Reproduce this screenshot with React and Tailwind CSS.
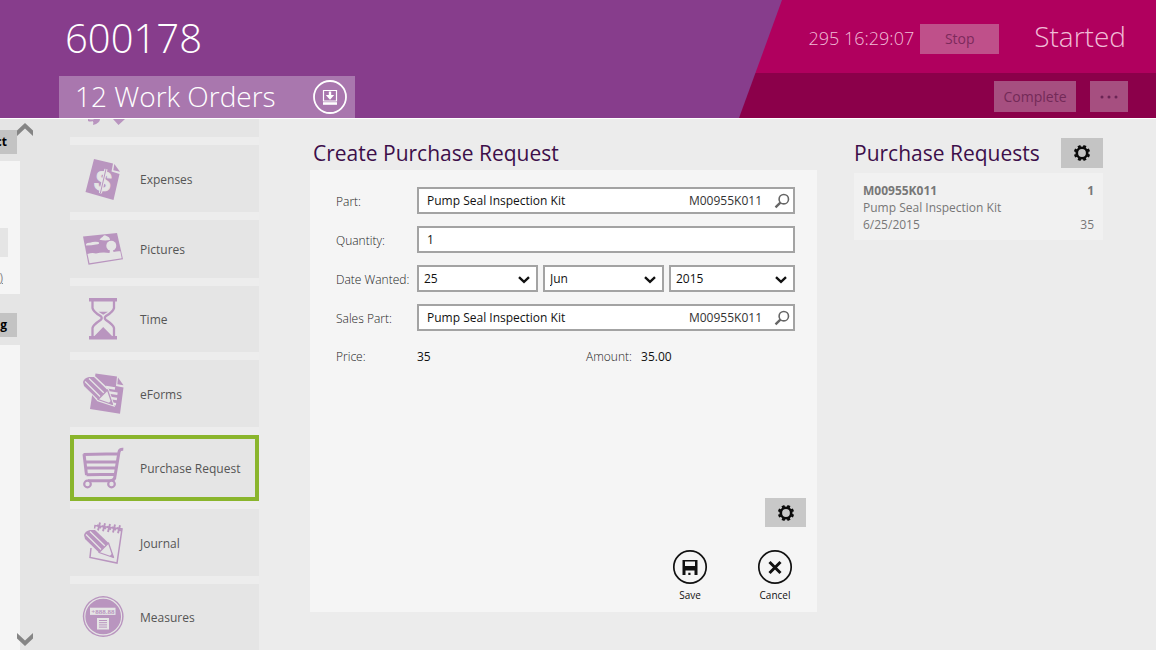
import React from "react";

const P = "#b995bf";
const L = "#e5e5e5";

function Icon({ children }) {
  return (
    <svg viewBox="0 0 44 44" className="h-11 w-11 shrink-0" fill={P} aria-hidden="true">
      {children}
    </svg>
  );
}

function Pencil() {
  return (
    <g>
      <path d="M1.5 14.5 Q1.5 9 8 8.5 L13 8.5 L27 21.5 L32.5 37.5 L17 32.5 Z" fill={L} stroke={L} strokeWidth="2" />
      <path d="M2 14 Q3 10 8 9 L13 9 L26.5 22 L17 31.5 L3 18 Z" />
      <path d="M4 13.5 L19.5 29 M8 10.5 L23.5 25.5" stroke={L} strokeWidth="1.3" fill="none" />
      <path d="M17 31.5 L26.5 22 L31.5 36.5 Z" fill={L} stroke={P} strokeWidth="1.3" strokeLinejoin="round" />
      <path d="M27.5 35.2 L30.2 32.5 L31.8 36.8 Z" />
    </g>
  );
}

const ExpensesIcon = () => (
  <Icon>
    <path d="M12 2 L31 6.5 L29.5 14.5 L37.5 17 L31.5 43 L3.5 35 Z" />
    <path d="M32.3 7 L38 14.8 L31.3 13.3 Z" />
    <g transform="rotate(13 21 24)">
      <text x="21" y="34" textAnchor="middle" fontSize="29" fontWeight="700" fontFamily="Liberation Sans, sans-serif" fill={L} stroke={L} strokeWidth="0.8">$</text>
    </g>
    <path d="M24 12 L18.4 36" stroke={L} strokeWidth="3" />
    <path d="M24 12 L18.4 36" stroke={P} strokeWidth="1" />
  </Icon>
);

const PicturesIcon = () => (
  <Icon>
    <path d="M1 9.5 L35 6 L41 32.3 L6.5 37.8 Z" />
    <path d="M5.5 27 Q10 25.5 14 26.5 Q20 25 27.5 26 L28 23 H31 L31.5 25 Q35 24 38.3 24.3 L39.7 31.3 L7.5 36.3 Z" fill={L} />
    <circle cx="29.3" cy="18.8" r="5" fill={L} />
    <path d="M17.5 12.8 Q19 10.5 20.5 10 Q22 7.3 24.5 9 Q28 10 28 13 Q23 14 17.5 12.8 Z" fill={L} />
    <path d="M4 18.5 Q3.5 15.5 8 15.8 Q12 14 16.5 15 Q18.5 17 14 17.5 Q10 18.5 4 18.5 Z" fill={L} />
  </Icon>
);

const TimeIcon = () => (
  <Icon>
    <path d="M7 1 H35 V4.5 H7 Z M7 39 H35 V42.5 H7 Z" />
    <path
      d="M10.5 4 V11 Q11 14.5 18.5 19 Q21 21 18.5 23 Q11 28 10.5 31 V39 M32 4 V11 Q31.5 14.5 24 19 Q21.5 21 24 23 Q31.5 28 32 31 V39"
      fill="none"
      stroke={P}
      strokeWidth="2.3"
    />
    <path d="M16.5 14.8 H26 L21.2 17.8 Z M21.2 30 L31 40 H11.5 Z" />
  </Icon>
);

const FormsIcon = () => (
  <Icon>
    <path d="M13.5 1.5 L35 4.5 L34 14 L41.5 15.5 L38 41.8 L8 37 Z" />
    <path d="M36 5.5 L41.5 13.2 L35.3 12.2 Z" />
    <path d="M24 15 L33 16.5 M27.5 20.5 L35.5 21.8 M28.5 26 L35 27 M29 31.5 L34 32.3" stroke={L} strokeWidth="2.6" />
    <g transform="translate(-1 -4)">
      <Pencil />
    </g>
  </Icon>
);

const CartIcon = () => (
  <Icon>
    <path
      d="M41.3 3.3 Q37.5 3 37 6 L33 30 M1.5 8.5 L36 7.8 M2 8 L4.5 29 M3.5 16 H34.5 M4 22 H34 M4.5 28.7 L33 28.2 M33 30 Q33 34.5 28 34.8 H6"
      fill="none"
      stroke={P}
      strokeWidth="3"
    />
    <circle cx="5.5" cy="38" r="3.3" fill={L} stroke={P} strokeWidth="2.2" />
    <circle cx="29.5" cy="38" r="3.3" fill={L} stroke={P} strokeWidth="2.2" />
  </Icon>
);

const JournalIcon = () => (
  <Icon>
    <path d="M12.5 8 L13 4.5 L40 8 L35 42 L8 36.5 L9 27" fill="none" stroke={P} strokeWidth="1.5" />
    {[17, 22, 27, 32, 37].map((x, i) => (
      <path key={x} d={`M${x + 1} ${1.5 + i * 0.7} L${x - 1} ${9.5 + i * 0.7} M${x - 2} ${4 + i * 0.7} L${x + 2} ${7 + i * 0.7}`} stroke={P} strokeWidth="1.9" />
    ))}
    <Pencil />
  </Icon>
);

const MeasuresIcon = () => (
  <Icon>
    <circle cx="21.2" cy="21.5" r="20.4" />
    <circle cx="21.2" cy="21.5" r="18.4" fill="none" stroke={L} strokeWidth="1.1" />
    <rect x="8" y="12.7" width="25.5" height="7.2" fill={L} />
    <text x="20.8" y="18.7" textAnchor="middle" fontSize="7" fontWeight="700" fontFamily="Liberation Serif, serif">+888.88</text>
    <rect x="15" y="23" width="12" height="11.5" fill={L} />
    <path d="M17 25.5 H25 M17 27.7 H25 M17 29.9 H25 M17 32.1 H25" stroke={P} strokeWidth="1" />
  </Icon>
);

function Gear() {
  return (
    <svg viewBox="0 0 18 18" className="h-[18px] w-[18px]" fill="none" stroke="#0a0a0a" aria-hidden="true">
      <circle cx="9" cy="9" r="5.2" strokeWidth="2.6" />
      {[22, 67, 112, 157, 202, 247, 292, 337].map((a) => (
        <path key={a} d="M9 3.2 V0.9" strokeWidth="3" transform={`rotate(${a} 9 9)`} />
      ))}
    </svg>
  );
}

function SearchIcon() {
  return (
    <svg viewBox="0 0 16 16" className="h-4 w-4" fill="none" stroke="#666" aria-hidden="true">
      <circle cx="9.8" cy="6.2" r="4.7" strokeWidth="1.6" />
      <path d="M6.4 9.6 L1.5 14.3" strokeWidth="2.4" />
    </svg>
  );
}

function Chevron({ down }) {
  return (
    <svg viewBox="0 0 16 14" className="h-3.5 w-4" fill="#858585" aria-hidden="true">
      <path d={down ? "M0 1 L8 8.5 L16 1 V6.5 L8 14 L0 6.5 Z" : "M0 13 L8 5.5 L16 13 V7.5 L8 0 L0 7.5 Z"} />
    </svg>
  );
}

const tiles = [
  { name: "Expenses", icon: ExpensesIcon, box: "h-[67px]" },
  { name: "Pictures", icon: PicturesIcon, box: "h-[58px]" },
  { name: "Time", icon: TimeIcon, box: "h-[66px]" },
  { name: "eForms", icon: FormsIcon, box: "h-[67px]" },
  { name: "Purchase Request", icon: CartIcon, box: "h-[66px]", active: true },
  { name: "Journal", icon: JournalIcon, box: "h-[67px]" },
  { name: "Measures", icon: MeasuresIcon, box: "h-[66px]" },
];

function Header() {
  return (
    <header className="flex h-[118px] shrink-0 bg-[#873d8c] text-white">
      <div className="flex min-w-0 flex-1 flex-col justify-between pl-[59px]">
        <h1 className="pl-1.5 pt-2 text-[40px] font-light leading-[60px]">600178</h1>
        <div className="flex h-[42px] w-[296px] items-center justify-between bg-[#a977ae] pl-4 pr-2">
          <h2 className="pb-0.5 text-[28px] font-light leading-10">12 Work Orders</h2>
          <button aria-label="Download" className="h-[34px] w-[34px]">
            <svg viewBox="0 0 34 34" className="h-full w-full" fill="none" stroke="#fff">
              <circle cx="17" cy="17" r="16" strokeWidth="1.8" />
              <path d="M10.5 10.5 H23.5 V21 H10.5 Z" strokeWidth="1.2" />
              <path d="M17 11.5 V16" strokeWidth="2.4" />
              <path d="M12.8 15 H21.2 L17 19.8 Z" fill="#fff" stroke="none" />
              <path d="M10 23.5 H24" strokeWidth="2.6" />
            </svg>
          </button>
        </div>
      </div>
      <div className="flex w-[417px] shrink-0 flex-col [clip-path:polygon(43px_0,100%_0,100%_100%,0_100%)]">
        <div className="flex h-[73px] items-center justify-end bg-[#b0005e] pr-[30px] pt-1 text-[#f0bcd6]">
          <span className="text-[18px] font-light">295 16:29:07</span>
          <button className="ml-1.5 h-[30px] w-[79px] bg-[#bf508a] text-[14px] text-[#7d2a5c]">Stop</button>
          <span className="ml-[35px] pb-1.5 text-[28px] font-light leading-10">Started</span>
        </div>
        <div className="flex h-[45px] items-center justify-end gap-3.5 bg-[#8b004a] pr-7 pt-0.5 text-[14px] text-[#732a58]">
          <button className="h-[31px] w-[82px] bg-[#a64f80]">Complete</button>
          <button aria-label="More" className="flex h-[31px] w-[38px] items-center justify-center gap-1 bg-[#a64f80]">
            <svg viewBox="0 0 18 4" className="h-1 w-[18px]" fill="#6b2555" aria-hidden="true">
              <circle cx="2" cy="2" r="1.5" />
              <circle cx="9" cy="2" r="1.5" />
              <circle cx="16" cy="2" r="1.5" />
            </svg>
          </button>
        </div>
      </div>
    </header>
  );
}

function LeftRail() {
  return (
    <div className="flex w-[70px] shrink-0 items-stretch bg-[#e5e5e5] text-[12px] font-bold">
      <div className="flex w-5 shrink-0 flex-col overflow-hidden">
        <div className="mt-[11px] flex h-6 w-[17px] shrink-0 items-center justify-end bg-[#c3c3c3] pr-2.5">ct</div>
        <div className="mt-[7px] flex h-[133px] shrink-0 flex-col items-start bg-[#f5f5f5]">
          <div className="mt-[67px] h-[29px] w-2 bg-[#e5e5e5]" />
          <a href="#details" className="mt-3 flex w-[3px] justify-end font-normal text-[#888] underline">)</a>
        </div>
        <div className="mt-[19px] flex h-6 w-[17px] shrink-0 items-center justify-end bg-[#c3c3c3] pr-2.5">g</div>
        <div className="mt-2 flex-1 bg-[#f5f5f5]" />
      </div>
      <div className="-ml-[3px] flex flex-col justify-between pb-1 pt-1">
        <button aria-label="Scroll up"><Chevron /></button>
        <button aria-label="Scroll down"><Chevron down /></button>
      </div>
    </div>
  );
}

function TileList() {
  return (
    <nav className="flex w-[189px] shrink-0 flex-col gap-2 overflow-hidden bg-[#ededed]">
      <div className="h-[18px] shrink-0 bg-[#e5e5e5] pl-4">
        <svg viewBox="0 0 40 8" className="h-2 w-10" fill={P} aria-hidden="true">
          <path d="M2 0 Q7 1 8 0 H14 Q14 4 7 6 Q8 3 6.5 2 Q4 3 2 2 Z M27 0 H39 L32.5 6 Z" />
        </svg>
      </div>
      {tiles.map(({ name, icon: TileIcon, box, active }) => (
        <button
          key={name}
          className={`${box} flex shrink-0 items-center bg-[#e5e5e5] text-left text-[12px] text-[#555] ${
            active ? "border-4 border-[#8ab52c] pl-2" : "pl-3"
          }`}
        >
          <TileIcon />
          <span className="ml-3.5 whitespace-nowrap pt-0.5">{name}</span>
        </button>
      ))}
    </nav>
  );
}

const fieldBox = "flex h-[27px] items-center border-2 border-[#a3a3a3] bg-white";

function PartField({ id, label }) {
  return (
    <>
      <label htmlFor={id} className="pt-0.5">{label}</label>
      <div className={fieldBox}>
        <input id={id} defaultValue="Pump Seal Inspection Kit" className="h-full min-w-0 flex-1 bg-transparent pl-2 font-normal text-[#111] outline-none" />
        <span className="font-normal text-[#333]">M00955K011</span>
        <button type="button" aria-label={`Find ${label}`} className="ml-3 mr-[3px]">
          <SearchIcon />
        </button>
      </div>
    </>
  );
}

function DateSelect({ label, value, id }) {
  return (
    <div className="relative">
      <select id={id} aria-label={label} defaultValue={value} className="block h-[27px] w-full appearance-none border-2 border-[#a3a3a3] bg-white pl-[5px] font-normal text-[#111] outline-none">
        <option>{value}</option>
      </select>
      <svg viewBox="0 0 12 8" className="pointer-events-none absolute right-2 top-[11px] h-2 w-3" fill="none" stroke="#111" strokeWidth="2.4" aria-hidden="true">
        <path d="M1 1.2 L6 5.8 L11 1.2" />
      </svg>
    </div>
  );
}

function RequestForm() {
  return (
    <section className="flex min-w-0 flex-1 flex-col">
      <h2 className="pl-[3px] pt-0.5 text-[21px] leading-[33px] text-[#3d0f4a]">Create Purchase Request</h2>
      <form className="flex flex-col bg-[#f5f5f5] pb-2.5 pl-[26px] pr-[11px] pt-[17px]" onSubmit={(e) => e.preventDefault()}>
        <div className="mr-[11px] grid grid-cols-[81px_1fr] items-center gap-y-3 whitespace-nowrap text-[12px] font-light text-[#222]">
          <PartField id="part" label="Part:" />
          <label htmlFor="quantity" className="pt-0.5">Quantity:</label>
          <input id="quantity" defaultValue="1" className="h-[27px] w-full border-2 border-[#a3a3a3] bg-white pl-2 font-normal text-[#111] outline-none" />
          <label htmlFor="day" className="pt-0.5">Date Wanted:</label>
          <div className="grid grid-cols-[121fr_121fr_126fr] gap-[5px]">
            <DateSelect id="day" label="Day" value="25" />
            <DateSelect id="month" label="Month" value="Jun" />
            <DateSelect id="year" label="Year" value="2015" />
          </div>
          <PartField id="sales-part" label="Sales Part:" />
          <span className="leading-[27px]">Price:</span>
          <div className="grid grid-cols-[169px_1fr] items-center">
            <span className="font-normal text-[#111]">35</span>
            <span>
              Amount: <span className="ml-1.5 font-normal text-[#111]">35.00</span>
            </span>
          </div>
        </div>
        <button type="button" aria-label="Settings" className="mt-32 flex h-[29px] w-[41px] items-center justify-center self-end bg-[#c8c8c8]">
          <Gear />
        </button>
        <div className="mr-1.5 mt-[22px] flex justify-end gap-[35px] text-[10px] text-[#111]">
          <button type="submit" className="flex w-[50px] flex-col items-center gap-[3px]">
            <svg viewBox="0 0 36 36" className="h-9 w-9" aria-hidden="true">
              <circle cx="18" cy="18" r="16.2" fill="none" stroke="#111" strokeWidth="1.7" />
              <path d="M10.5 11 H25.5 V26 H10.5 Z" fill="#111" />
              <path d="M13 12.5 H23 V17 H13 Z M13.5 21.5 H22.5 V26 H18.5 V23.7 H16.3 V26 H13.5 Z" fill="#f5f5f5" />
            </svg>
            <span className="leading-[14px]">Save</span>
          </button>
          <button type="button" className="flex w-[50px] flex-col items-center gap-[3px]">
            <svg viewBox="0 0 36 36" className="h-9 w-9" fill="none" stroke="#111" aria-hidden="true">
              <circle cx="18" cy="18" r="16.2" strokeWidth="1.7" />
              <path d="M12.5 13 L23.5 24 M23.5 13 L12.5 24" strokeWidth="3" />
            </svg>
            <span className="leading-[14px]">Cancel</span>
          </button>
        </div>
      </form>
    </section>
  );
}

function RequestList() {
  return (
    <aside className="w-[249px] shrink-0">
      <div className="flex items-start justify-between">
        <h2 className="whitespace-nowrap pt-0.5 text-[21px] leading-[33px] text-[#3d0f4a]">Purchase Requests</h2>
        <button aria-label="List settings" className="mt-[3px] flex h-[30px] w-[42px] items-center justify-center bg-[#c4c4c4]">
          <Gear />
        </button>
      </div>
      <div className="mt-[3px] grid grid-cols-[1fr_auto] bg-[#f1f1f1] px-[9px] pb-[7px] pt-[9px] text-[12px] leading-[17px] text-[#777]">
        <strong>M00955K011</strong>
        <strong className="text-right">1</strong>
        <span className="col-span-2">Pump Seal Inspection Kit</span>
        <span>6/25/2015</span>
        <span className="text-right">35</span>
      </div>
    </aside>
  );
}

export default function App() {
  return (
    <div className="flex h-screen flex-col overflow-hidden bg-[#ececec] font-['Open_Sans','Noto_Sans',sans-serif]">
      <Header />
      <div className="flex min-h-0 flex-1 border-t border-white">
        <LeftRail />
        <TileList />
        <main className="flex min-w-0 flex-1 items-start gap-[37px] pl-[51px] pr-[53px] pt-4">
          <RequestForm />
          <RequestList />
        </main>
      </div>
    </div>
  );
}
